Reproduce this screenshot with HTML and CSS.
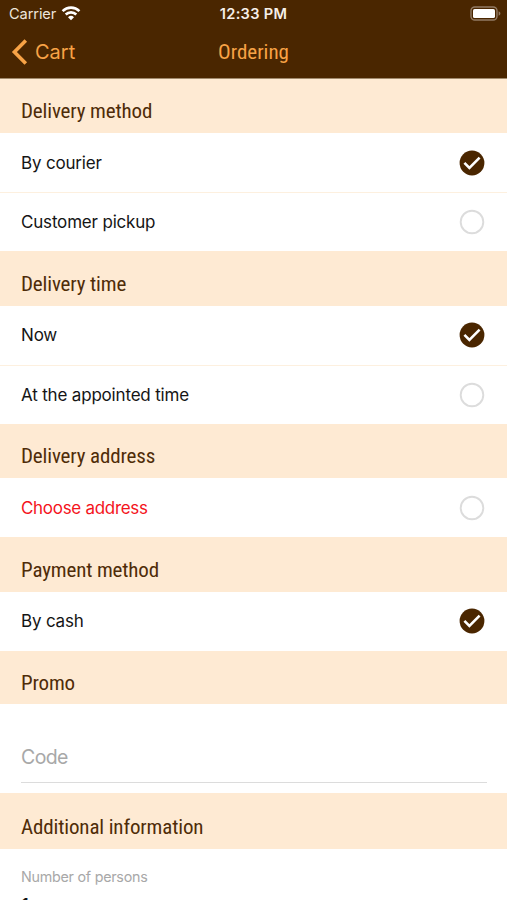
FILE: index.html
```html
<!DOCTYPE html>
<html lang="en">
<head>
<meta charset="utf-8">
<title>Ordering</title>
<link rel="stylesheet" href="styles.css">
</head>
<body>
<svg class="defs" width="0" height="0" aria-hidden="true">
  <symbol id="checked" viewBox="0 0 26 26"><circle cx="13" cy="13" r="12.4" fill="#4a2600"/><path d="M5.4 12.8l5 5L20.6 7.7" fill="none" stroke="#fff" stroke-width="2.6"/></symbol>
  <symbol id="empty" viewBox="0 0 26 26"><circle cx="13" cy="13" r="11.3" fill="none" stroke="#dcdcdc" stroke-width="1.9"/></symbol>
</svg>
<div class="screen">
  <header class="top">
    <div class="status">
      <div class="carrier"><span>Carrier</span>
        <svg class="wifi" width="20" height="16" viewBox="0 0 20 16" fill="none" stroke="#fff" stroke-width="2.6"><path d="M1.6 6.1a12 12 0 0 1 16.8 0M4.7 9.5a7.6 7.6 0 0 1 10.6 0"/><path d="M10 15.2l-3-3a4.3 4.3 0 0 1 6 0z" fill="#fff" stroke="none"/></svg>
      </div>
      <div class="clock">12:33 PM</div>
      <svg class="battery" width="31" height="16" viewBox="0 0 31 16"><rect x="1" y="1" width="26" height="13" rx="3.8" fill="none" stroke="#927b64" stroke-width="1.4"/><rect x="3" y="3" width="22" height="9" rx="1.6" fill="#fff"/><path d="M28.6 5.3c2.4.8 2.4 3.6 0 4.4z" fill="#927b64"/></svg>
    </div>
    <nav class="nav">
      <a class="back"><svg width="17" height="28" viewBox="0 0 17 28"><path d="M14.8 2.5L3.4 14l11.4 11.5" fill="none" stroke="#f8a346" stroke-width="3.6"/></svg><span>Cart</span></a>
      <h1>Ordering</h1>
    </nav>
  </header>
  <main>
    <h2 class="first">Delivery method</h2>
    <div class="row"><span>By courier</span><svg class="mark"><use href="#checked"/></svg></div>
    <div class="row line"><span>Customer pickup</span><svg class="mark"><use href="#empty"/></svg></div>
    <h2>Delivery time</h2>
    <div class="row"><span>Now</span><svg class="mark"><use href="#checked"/></svg></div>
    <div class="row line"><span>At the appointed time</span><svg class="mark"><use href="#empty"/></svg></div>
    <h2>Delivery address</h2>
    <div class="row"><span class="error">Choose address</span><svg class="mark"><use href="#empty"/></svg></div>
    <h2>Payment method</h2>
    <div class="row"><span>By cash</span><svg class="mark"><use href="#checked"/></svg></div>
    <h2 class="promo">Promo</h2>
    <div class="field"><div class="input">Code</div></div>
    <h2 class="info">Additional information</h2>
    <div class="persons"><div class="label">Number of persons</div><div class="value">1</div></div>
  </main>
</div>
</body>
</html>
```
FILE: styles.css
```css
* { box-sizing: border-box; }
body { margin: 0; font-family: Inter, sans-serif; background: #fff; color: #151515; }
.defs { display: block; height: 0; }
.screen { width: 507px; height: 900px; overflow: hidden; }
.top { height: 79px; background: #4a2600; border-bottom: 1px solid #a18a6c; color: #fff; }
.status { height: 27px; display: grid; grid-template-columns: 1fr auto 1fr; align-items: center; padding: 0 6px 0 9px; }
.carrier { display: flex; align-items: center; gap: 5px; font-size: 14.6px; letter-spacing: -0.1px; color: #eee5dc; }
.wifi { margin-top: -2px; }
.clock { margin-left: -3px; font-size: 14.6px; font-weight: 600; letter-spacing: 0.3px; color: #f6efe9; }
.battery { justify-self: end; }
.nav { height: 50px; display: grid; grid-template-columns: 1fr auto 1fr; align-items: center; padding: 0 11px; color: #f8a346; }
.back { display: flex; align-items: center; gap: 7px; font-size: 20px; }
h1, h2 { margin: 0; font-family: "Roboto Condensed", Roboto, sans-serif; font-stretch: 75%; font-weight: 400; font-size: 21px; white-space: nowrap; }
h1 { line-height: 24px; margin-top: -1px; }
h2 { height: 54.2px; padding: 19.3px 21px 0; line-height: 27px; letter-spacing: -0.14px; background: #feead3; color: #4f2c08; }
h2.first { height: 54px; padding-top: 19px; }
h2.promo { height: 53.2px; }
.row { height: 59.2px; padding: 0 22px 0 21px; display: flex; align-items: center; justify-content: space-between; font-size: 17px; letter-spacing: -0.18px; }
.line { border-top: 1px solid #fdf0df; }
.mark { width: 26px; height: 26px; }
.error { color: #f4141c; letter-spacing: -0.3px; }
.field { height: 89px; padding: 0 20px 0 21px; }
.input { height: 79px; padding-top: 39px; line-height: 28px; border-bottom: 1px solid #dcdcdc; font-size: 19.5px; letter-spacing: -0.6px; color: #a8a8a8; }
h2.info { height: 56px; padding-top: 21px; }
.persons { padding: 18px 21px 0; }
.label { font-size: 14.3px; line-height: 20px; letter-spacing: -0.25px; color: #a8a8a8; }
.value { margin-top: 7px; font-size: 20px; line-height: 24px; }
```
